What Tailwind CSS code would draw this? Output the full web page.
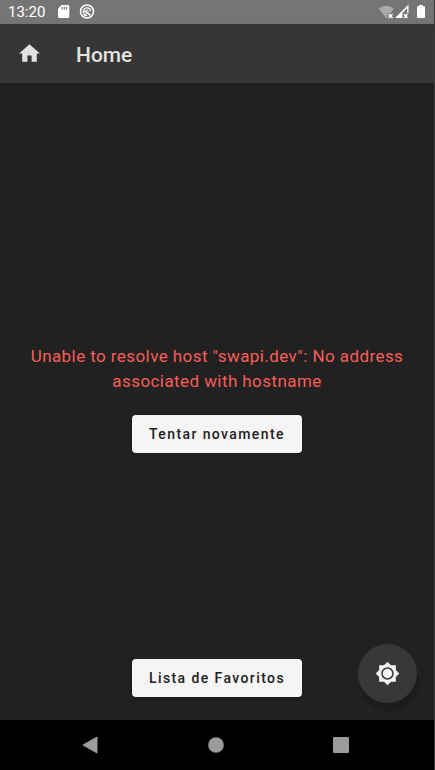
<!DOCTYPE html>
<html lang="pt-BR">
<head>
<meta charset="utf-8">
<meta name="viewport" content="width=device-width, initial-scale=1">
<title>Home</title>
<script src="https://cdn.jsdelivr.net/npm/@tailwindcss/browser@4"></script>
</head>
<body class="bg-black font-[Roboto,sans-serif]">
<div class="flex min-h-screen flex-col border-r border-[#3c3c3c] bg-[#212121]">
  <div class="flex h-6 shrink-0 items-center bg-[#757575] px-2 text-white">
    <span class="text-[15px]">13:20</span>
    <svg class="ml-[11px] size-4" viewBox="0 0 16 16" aria-hidden="true"><path fill="currentColor" fill-rule="evenodd" d="M5.600 1H12a1.300 1.300 0 0 1 1.300 1.300v10.400A1.300 1.300 0 0 1 12 14H3.300A1.300 1.300 0 0 1 2 12.700V4.800zM5.500 3v2.500h1.200V3zm2.200 0v2.500h1.200V3zm2.200 0v2.500h1.200V3z"/></svg>
    <svg class="ml-[7px] size-4" viewBox="0 0 16 16" fill="none" stroke="currentColor" aria-hidden="true"><circle cx="8" cy="7.500" r="6.500" stroke-width="1.500"/><path d="M4.300 9V7.500A3.700 3.700 0 0 1 8 3.800c2 0 3.500 1.400 3.500 3.500" stroke-width="1.300"/><path d="M5.200 6.700 11.500 11.300M4.500 9.500C5.300 11 6.500 11.500 8 11.300" stroke-width="1.700"/><path d="M7 6.200h1.500l1 1.600" stroke-width="1"/></svg>
    <svg class="ml-auto h-4 w-[17px]" viewBox="0 0 17 16" aria-hidden="true"><path fill="#a9a9a9" d="M.5 4.500Q8 -1 16 4.500L12.500 9H9.500v4L8.200 14z"/><path d="m10.500 10 4 4m0-4-4 4" stroke="currentColor" stroke-width="1.500"/></svg>
    <svg class="h-4 w-[15px]" viewBox="0 0 15 16" aria-hidden="true"><path fill="currentColor" fill-rule="evenodd" d="M0 14 13.500 .500V9h-1.300V4.200L7.500 8.700V14z"/><path d="m9 10 3.500 4m0-4L9 14" stroke="currentColor" stroke-width="1.400"/></svg>
    <svg class="ml-1.5 h-4 w-[10px]" viewBox="0 0 10 16" aria-hidden="true"><path fill="currentColor" d="M3 1h4v1.300h1A1 1 0 0 1 9 3.300V13a1 1 0 0 1-1 1H2a1 1 0 0 1-1-1V3.300a1 1 0 0 1 1-1h1z"/></svg>
  </div>
  <header class="flex h-[59px] shrink-0 items-center gap-[34px] bg-[#363636] px-[17px] text-[#e2e2e2] shadow-sm">
    <button type="button" aria-label="Home"><svg class="size-[25px]" viewBox="0 0 24 24" fill="currentColor" aria-hidden="true"><path d="M10 20v-6h4v6h5v-8h3L12 3 2 12h3v8z"/></svg></button>
    <h1 class="pt-1 text-[21px] font-medium">Home</h1>
  </header>
  <main class="relative grid flex-1 grid-rows-[1fr_auto_1fr] justify-items-center">
    <section class="row-start-2 flex flex-col items-center gap-[21px] px-6 pb-[6px] text-center">
      <p class="text-[17px] leading-[25px] tracking-wide text-[#f65e57]">Unable to resolve host "swapi.dev": No address associated with hostname</p>
      <button type="button" class="h-[38px] rounded bg-[#f5f5f5] px-[17px] text-sm font-medium tracking-widest text-[#212121] shadow-sm">Tentar novamente</button>
    </section>
    <button type="button" class="row-start-3 mb-[23px] h-[38px] self-end rounded bg-[#f5f5f5] px-[17px] text-sm font-medium tracking-widest text-[#212121] shadow-sm">Lista de Favoritos</button>
    <button type="button" aria-label="Tema" class="absolute right-[17px] bottom-[17px] grid size-[59px] place-items-center rounded-full bg-[#383838] text-[#f5f5f5] shadow-[2px_8px_1px_#1c1c1c]">
      <svg class="size-[25px]" viewBox="0 0 24 24" aria-hidden="true"><path fill="currentColor" fill-rule="evenodd" d="M20 8.690V4h-4.690L12 .690 8.690 4H4v4.690L.690 12 4 15.310V20h4.690L12 23.310 15.310 20H20v-4.690L23.310 12zM12 18a6 6 0 1 1 0-12 6 6 0 0 1 0 12z"/><circle cx="12" cy="12" r="4.500" fill="currentColor"/></svg>
    </button>
  </main>
  <nav class="flex h-[50px] shrink-0 items-center justify-between bg-black pr-[84px] pl-[81px] text-[#9b9b9b]">
    <button type="button" aria-label="Voltar"><svg class="size-[18px]" viewBox="0 0 18 18" aria-hidden="true"><path d="M2 9 16 1v16z" fill="currentColor" stroke="currentColor" stroke-linejoin="round"/></svg></button>
    <button type="button" aria-label="Início"><svg class="size-[18px]" viewBox="0 0 18 18" aria-hidden="true"><circle cx="9" cy="9" r="7.800" fill="currentColor"/></svg></button>
    <button type="button" aria-label="Recentes"><svg class="size-[18px]" viewBox="0 0 18 18" aria-hidden="true"><rect x="1" y="1" width="16" height="16" rx="1" fill="currentColor"/></svg></button>
  </nav>
</div>
</body>
</html>
